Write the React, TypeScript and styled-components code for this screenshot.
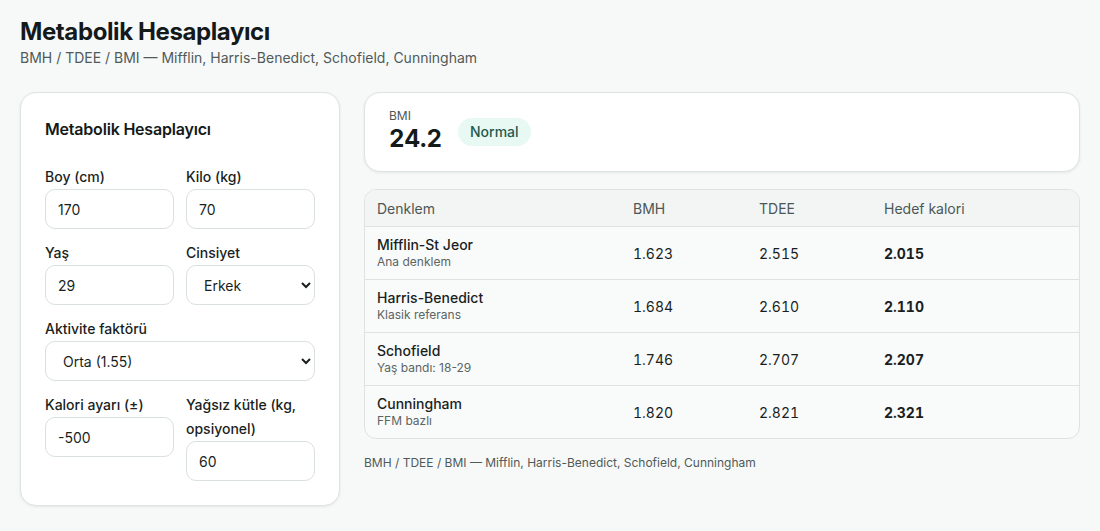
import styled, {createGlobalStyle} from 'styled-components';

const GlobalStyle = createGlobalStyle`
  html, body {
    margin: 0;
    background: #f7f9f9;
    font-family: Inter, "Noto Sans", sans-serif;
    color: #1a1f1e;
  }
`;

type Row = { name: string; note: string; bmh: string; tdee: string; target: string };

const rows: Row[] = [
    {name: 'Mifflin-St Jeor', note: 'Ana denklem', bmh: '1.623', tdee: '2.515', target: '2.015'},
    {name: 'Harris-Benedict', note: 'Klasik referans', bmh: '1.684', tdee: '2.610', target: '2.110'},
    {name: 'Schofield', note: 'Yaş bandı: 18-29', bmh: '1.746', tdee: '2.707', target: '2.207'},
    {name: 'Cunningham', note: 'FFM bazlı', bmh: '1.820', tdee: '2.821', target: '2.321'},
];

const Field = ({label, children}: { label: string; children: React.ReactNode }) => (
    <FieldBox>
        <Label>{label}</Label>
        {children}
    </FieldBox>
);

export default function App() {
    return (
        <Page>
            <GlobalStyle/>
            <Header>
                <Title>Metabolik Hesaplayıcı</Title>
                <Subtitle>BMH / TDEE / BMI — Mifflin, Harris-Benedict, Schofield, Cunningham</Subtitle>
            </Header>
            <Layout>
                <FormCard>
                    <CardTitle>Metabolik Hesaplayıcı</CardTitle>
                    <FormGrid>
                        <Field label="Boy (cm)"><Input defaultValue="170"/></Field>
                        <Field label="Kilo (kg)"><Input defaultValue="70"/></Field>
                        <Field label="Yaş"><Input defaultValue="29"/></Field>
                        <Field label="Cinsiyet">
                            <Select defaultValue="e">
                                <option value="e">Erkek</option>
                                <option value="k">Kadın</option>
                            </Select>
                        </Field>
                        <Wide>
                            <Field label="Aktivite faktörü">
                                <Select defaultValue="1.55">
                                    <option value="1.55">Orta (1.55)</option>
                                </Select>
                            </Field>
                        </Wide>
                        <Field label="Kalori ayarı (±)"><Input defaultValue="-500"/></Field>
                        <Field label="Yağsız kütle (kg, opsiyonel)"><Input defaultValue="60"/></Field>
                    </FormGrid>
                </FormCard>
                <Results>
                    <BmiCard>
                        <div>
                            <BmiLabel>BMI</BmiLabel>
                            <BmiValue>24.2</BmiValue>
                        </div>
                        <Badge>Normal</Badge>
                    </BmiCard>
                    <TableWrap>
                        <Table>
                            <colgroup>
                                <col style={{width: 256}}/>
                                <col style={{width: 126}}/>
                                <col style={{width: 125}}/>
                                <col/>
                            </colgroup>
                            <thead>
                            <tr>
                                <Th>Denklem</Th>
                                <Th>BMH</Th>
                                <Th>TDEE</Th>
                                <Th>Hedef kalori</Th>
                            </tr>
                            </thead>
                            <tbody>
                            {rows.map(r => (
                                <tr key={r.name}>
                                    <Td>
                                        <Name>{r.name}</Name>
                                        <Note>{r.note}</Note>
                                    </Td>
                                    <NumTd>{r.bmh}</NumTd>
                                    <NumTd>{r.tdee}</NumTd>
                                    <NumTd $strong>{r.target}</NumTd>
                                </tr>
                            ))}
                            </tbody>
                        </Table>
                    </TableWrap>
                    <Footnote>BMH / TDEE / BMI — Mifflin, Harris-Benedict, Schofield, Cunningham</Footnote>
                </Results>
            </Layout>
        </Page>
    );
}

const Page = styled.div`
  padding: 16px 20px 20px;
`

const Header = styled.header`
  margin-bottom: 24px;
`

const Title = styled.h1`
  margin: 0;
  font-size: 24px;
  line-height: 32px;
  font-weight: 700;
  letter-spacing: -0.4px;
  color: #141a19;
`

const Subtitle = styled.div`
  font-size: 14px;
  line-height: 20px;
  color: #505a58;
`

const Layout = styled.div`
  display: grid;
  grid-template-columns: 320px 1fr;
  gap: 24px;
  align-items: start;
`

const Card = styled.section`
  background: #fff;
  border: 1px solid #dde3e2;
  border-radius: 16px;
  box-shadow: 0 1px 3px rgba(20, 40, 35, 0.08);
`

const FormCard = styled(Card)`
  padding: 24px 24px 24px;
`

const CardTitle = styled.h2`
  margin: 0 0 24px;
  font-size: 16px;
  line-height: 24px;
  font-weight: 600;
  letter-spacing: -0.2px;
  color: #141a19;
`

const FormGrid = styled.div`
  display: grid;
  grid-template-columns: 1fr 1fr;
  column-gap: 12px;
  row-gap: 12px;
  align-items: start;
`

const Wide = styled.div`
  grid-column: 1 / -1;
`

const FieldBox = styled.label`
  display: flex;
  flex-direction: column;
`

const Label = styled.span`
  font-size: 14px;
  line-height: 24px;
  font-weight: 500;
  color: #1a1f1e;
`

const controlStyles = `
  box-sizing: border-box;
  width: 100%;
  height: 40px;
  border: 1px solid #d9e0df;
  border-radius: 10px;
  background: #fff;
  font-family: Inter, "Noto Sans", sans-serif;
  font-size: 14px;
  color: #1a1f1e;
  outline: none;
`

const Input = styled.input`
  ${controlStyles};
  padding: 0 12px;
`

const Select = styled.select`
  ${controlStyles};
  padding: 0 10px 0 13px;
`

const Results = styled.div`
  display: flex;
  flex-direction: column;
`

const BmiCard = styled(Card)`
  display: flex;
  align-items: center;
  gap: 16px;
  padding: 16px 24px 16px;
`

const BmiLabel = styled.div`
  font-size: 12px;
  line-height: 14px;
  color: #4d5755;
`

const BmiValue = styled.div`
  font-size: 24px;
  line-height: 32px;
  font-weight: 700;
  color: #141a19;
  font-variant-numeric: tabular-nums;
`

const Badge = styled.span`
  padding: 6px 12px;
  border-radius: 999px;
  background: #e8f8f3;
  color: #1f5a4d;
  font-size: 14px;
  line-height: 16px;
  font-weight: 500;
`

const TableWrap = styled.div`
  margin-top: 17px;
  border: 1px solid #dde3e2;
  border-radius: 12px;
  overflow: hidden;
  background: #f9fafa;
`

const Table = styled.table`
  width: 100%;
  border-collapse: collapse;
  table-layout: fixed;
`

const Th = styled.th`
  text-align: left;
  padding: 0 12px;
  height: 36px;
  background: #f2f5f4;
  border-bottom: 1px solid #dde3e2;
  font-size: 14px;
  font-weight: 400;
  color: #4d5755;
`

const Td = styled.td`
  padding: 0 12px;
  height: 52px;
  border-bottom: 1px solid #dde3e2;
  font-size: 14px;
  color: #1a1f1e;

  tr:last-child > & {
    border-bottom: none;
  }
`

const NumTd = styled(Td)<{ $strong?: boolean }>`
  font-variant-numeric: tabular-nums;
  font-weight: ${({$strong}) => ($strong ? 700 : 400)};
`

const Name = styled.div`
  font-size: 14px;
  line-height: 18px;
  font-weight: 500;
`

const Note = styled.div`
  font-size: 12px;
  line-height: 16px;
  color: #5b6563;
`

const Footnote = styled.p`
  margin: 16px 0 0;
  font-size: 12px;
  line-height: 16px;
  color: #505a58;
`
